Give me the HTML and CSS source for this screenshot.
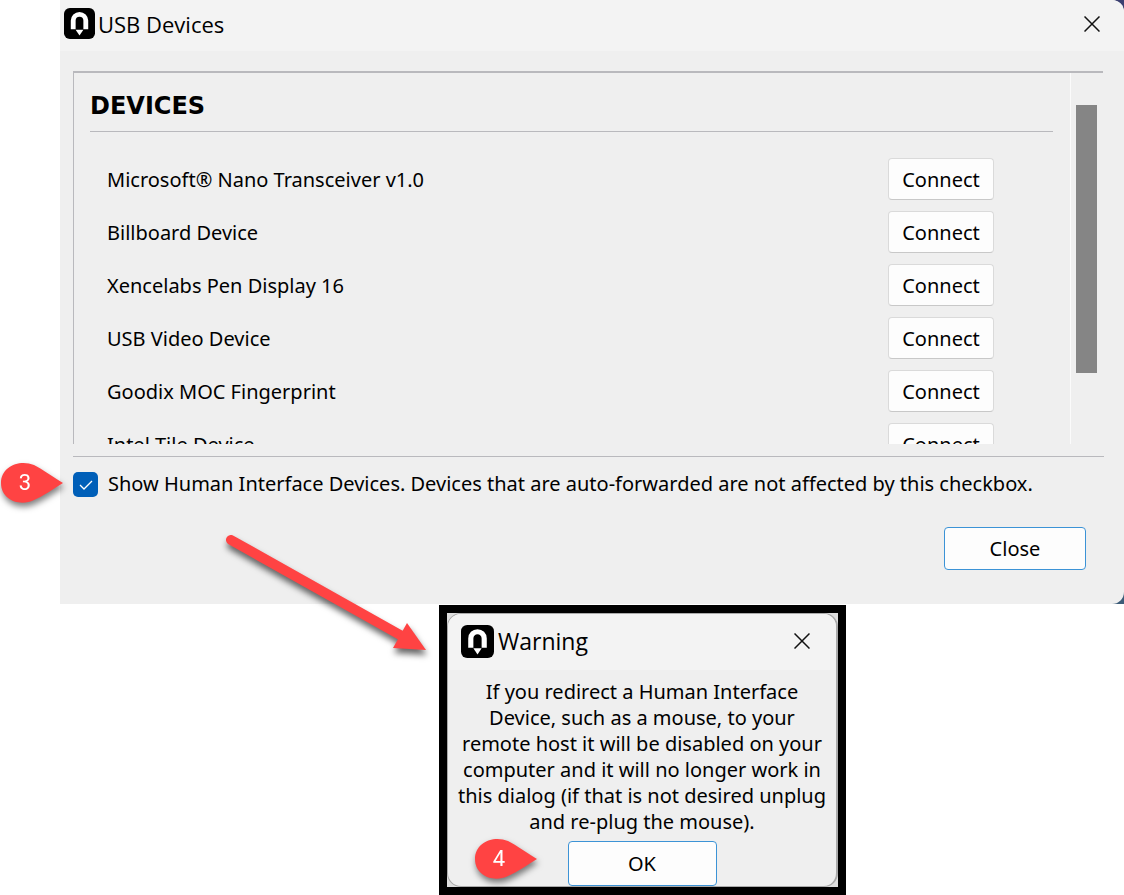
FILE: index.html
```html
<!DOCTYPE html>
<html lang="en">

<head>
    <meta charset="UTF-8">
    <meta name="viewport" content="width=device-width, initial-scale=1.0">
    <title>USB Devices</title>
    <link rel="stylesheet" href="styles.css">
</head>

<body>
    <!-- Shared shapes -->
    <svg class="symbols" aria-hidden="true">
        <symbol id="logo" viewBox="0 0 32 32">
            <rect width="32" height="32" rx="6" fill="#000" />
            <path d="M7 22V13a9 9 0 0 1 18 0v9h-5v-9a4 4 0 0 0-8 0v9z" fill="#fff" />
            <path d="M12 22.500h8L16 28.500z" fill="#fff" />
        </symbol>
        <symbol id="cross" viewBox="0 0 16 16">
            <path d="M.5.5l15 15M15.500.5l-15 15" fill="none" stroke="#111" stroke-width="1.500" />
        </symbol>
        <symbol id="pin" viewBox="0 0 64 42">
            <path d="M63 21C55 16 42 7 34 3C20-3 1 4 1 21C1 38 20 45 34 38C42 35 55 26 63 21z" fill="#ff4343" />
        </symbol>
    </svg>

    <div class="backdrop">
        <section class="dialog">
            <header class="title-bar">
                <svg class="logo"><use href="#logo" /></svg>
                <h1>USB Devices</h1>
                <button class="close-icon" aria-label="Close window"><svg><use href="#cross" /></svg></button>
            </header>

            <div class="device-box">
                <div class="devices">
                    <h2>DEVICES</h2>
                    <ul>
                        <li><span>Microsoft® Nano Transceiver v1.0</span><button>Connect</button></li>
                        <li><span>Billboard Device</span><button>Connect</button></li>
                        <li><span>Xencelabs Pen Display 16</span><button>Connect</button></li>
                        <li><span>USB Video Device</span><button>Connect</button></li>
                        <li><span>Goodix MOC Fingerprint</span><button>Connect</button></li>
                        <li><span>Intel Tile Device</span><button>Connect</button></li>
                    </ul>
                </div>
                <div class="scrollbar">
                    <div class="thumb"></div>
                </div>
            </div>

            <div class="option">
                <input type="checkbox" id="show-hid" checked>
                <label for="show-hid">Show Human Interface Devices. Devices that are auto-forwarded are not affected by this checkbox.</label>
            </div>

            <footer class="actions">
                <button class="default">Close</button>
            </footer>
        </section>
    </div>

    <div class="warning-frame">
        <section class="warning">
            <header class="title-bar">
                <svg class="logo"><use href="#logo" /></svg>
                <h1>Warning</h1>
                <button class="close-icon" aria-label="Close warning"><svg><use href="#cross" /></svg></button>
            </header>
            <p>If you redirect a Human Interface<br>
                Device, such as a mouse, to your<br>
                remote host it will be disabled on your<br>
                computer and it will no longer work in<br>
                this dialog (if that is not desired unplug<br>
                and re-plug the mouse).</p>
            <button class="default">OK</button>
        </section>
    </div>

    <!-- Callouts -->
    <div class="pin pin-three"><svg><use href="#pin" /></svg><span>3</span></div>
    <div class="pin pin-four"><svg><use href="#pin" /></svg><span>4</span></div>
    <svg class="arrow" viewBox="0 0 204 122">
        <path d="M7 5L178 101" fill="none" stroke="#ff4343" stroke-width="10" stroke-linecap="round" />
        <path d="M183 88L202 115L169 113z" fill="#ff4343" />
    </svg>
</body>

</html>
```

FILE: styles.css
```css
:root {
    --dialog: #efefef;
    --title: #f3f3f3;
    --line: #b9b9bd;
    --blue: #3c93d6;
}

* {
    box-sizing: border-box;
}

body {
    position: relative;
    margin: 0;
    background-color: #fff;
    color: #000;
    font-family: "Noto Sans", "Open Sans", sans-serif;
    font-size: 20px;
    line-height: 26px;
}

.symbols {
    display: none;
}

button {
    padding: 0;
    background-color: #fdfdfd;
    border: 1px solid #dadada;
    border-bottom-color: #c8c8c8;
    border-radius: 4px;
    color: inherit;
    font: inherit;
}

button.default {
    border-color: var(--blue);
}

.backdrop {
    margin-left: 60px;
    background: linear-gradient(#3a3f70, #3c5c78);
}

.dialog {
    background-color: var(--dialog);
    border-radius: 0 12px 12px 0;
    overflow: hidden;
}

.title-bar {
    display: flex;
    align-items: center;
    gap: 3px;
    height: 51px;
    padding: 0 24px 4px 4px;
    background-color: var(--title);
}

.title-bar h1 {
    flex: 1;
    margin: 0;
    font-family: "Open Sans", sans-serif;
    font-size: 22px;
    font-weight: 400;
}

.logo {
    width: 31px;
    height: 31px;
}

.close-icon {
    display: flex;
    background: none;
    border: 0;
}

.close-icon svg {
    width: 16px;
    height: 16px;
}

.device-box {
    display: flex;
    height: 373px;
    margin: 20px 21px 0 13px;
    border-top: 2px solid var(--line);
    border-left: 1px solid var(--line);
    overflow: hidden;
}

.devices {
    flex: 1;
    padding: 0 17px 0 16px;
}

.devices h2 {
    margin: 0;
    padding: 20px 0 12px;
    border-bottom: 1px solid var(--line);
    font-family: "DejaVu Sans", sans-serif;
    font-size: 24px;
    line-height: 26px;
}

.devices ul {
    display: flex;
    flex-direction: column;
    gap: 11px;
    margin: 0;
    padding: 26px 59px 0 17px;
    list-style: none;
}

.devices li {
    display: flex;
    justify-content: space-between;
    align-items: center;
}

.devices li span,
.devices button {
    padding-top: 2px;
}

.devices button {
    width: 106px;
    height: 42px;
}

.scrollbar {
    width: 33px;
    padding: 32px 6px 0 5px;
    border-left: 1px solid #fbfbfb;
}

.thumb {
    height: 268px;
    background-color: #858585;
}

.option {
    display: flex;
    align-items: center;
    gap: 10px;
    margin: 12px 20px 0 13px;
    padding-top: 14px;
    border-top: 1px solid var(--line);
    white-space: nowrap;
}

.option input {
    flex: none;
    width: 25px;
    height: 25px;
    margin: 0;
    appearance: none;
    border-radius: 5px;
    background: #005fb8 url("data:image/svg+xml,%3Csvg xmlns='http://www.w3.org/2000/svg' viewBox='0 0 25 25'%3E%3Cpath d='M7 13l4 4 8-8' fill='none' stroke='white' stroke-width='1.300'/%3E%3C/svg%3E");
}

.actions {
    display: flex;
    justify-content: flex-end;
    padding: 30px 38px 34px;
}

.actions button {
    width: 142px;
    height: 43px;
}

.warning-frame {
    width: 407px;
    margin: 1px 0 0 439px;
    border: 8px solid #000;
    background-color: #dedede;
}

.warning {
    display: flex;
    flex-direction: column;
    align-items: center;
    height: 274px;
    background-color: var(--dialog);
    border: 1px solid #aaa;
    border-right-width: 2px;
    border-radius: 14px;
    overflow: hidden;
}

.warning .title-bar {
    gap: 4px;
    width: 100%;
    height: 56px;
    padding: 0 26px 2px 13px;
}

.warning .title-bar h1 {
    font-size: 23px;
}

.warning .logo {
    width: 33px;
    height: 33px;
}

.warning p {
    margin: 9px 0 6px;
    text-align: center;
    white-space: nowrap;
}

.warning .default {
    width: 149px;
    height: 45px;
}

.pin {
    position: absolute;
    width: 64px;
    height: 42px;
    color: #fff;
    font-family: Roboto, sans-serif;
    font-size: 22px;
    filter: drop-shadow(1px 4px 3px rgba(0, 0, 0, 0.5));
}

.pin svg {
    display: block;
    width: 100%;
    height: 100%;
}

.pin span {
    position: absolute;
    inset: 8px 14px 8px 0;
    text-align: center;
}

.pin-three {
    top: 462px;
    left: 0;
}

.pin-four {
    top: 838px;
    left: 474px;
}

.arrow {
    position: absolute;
    top: 535px;
    left: 224px;
    width: 204px;
    height: 122px;
    overflow: visible;
    filter: drop-shadow(1px 5px 3px rgba(0, 0, 0, 0.6));
}
```
